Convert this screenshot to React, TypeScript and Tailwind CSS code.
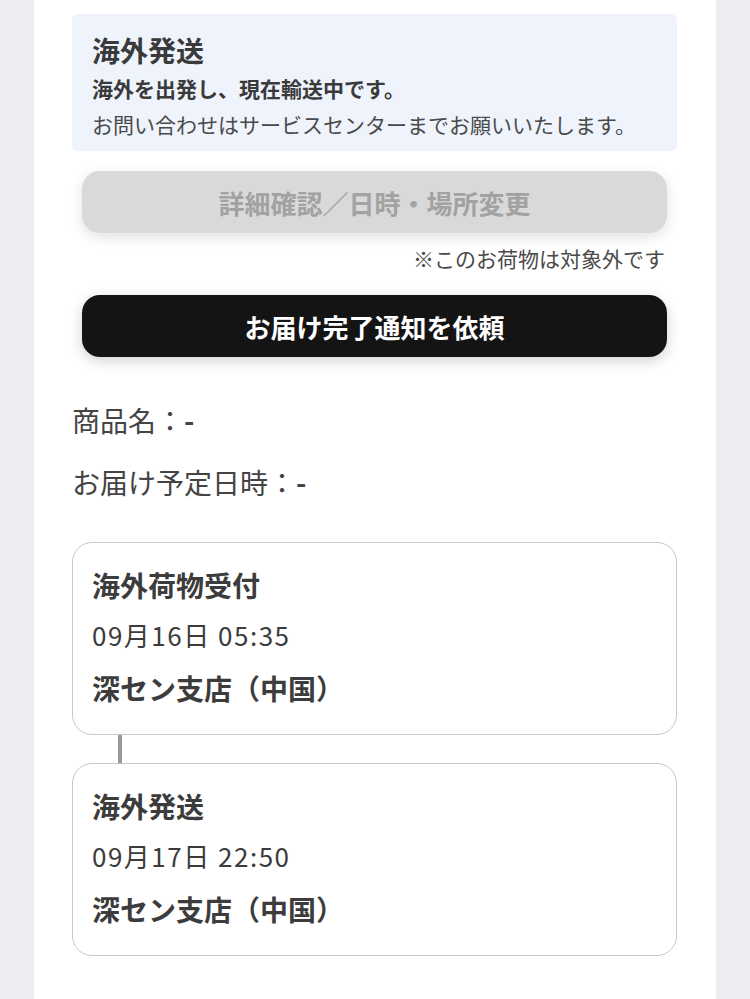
import React from "react";

const font = { fontFamily: '"Noto Sans CJK JP", "Noto Sans", sans-serif' };

type Step = { title: string; date: string; place: string };

const steps: Step[] = [
  { title: "海外荷物受付", date: "09月16日 05:35", place: "深セン支店（中国）" },
  { title: "海外発送", date: "09月17日 22:50", place: "深セン支店（中国）" },
];

function StepCard({ step }: { step: Step }) {
  return (
    <div className="rounded-[20px] border border-[#c8c8c8] bg-white px-[19px] pt-[24px] pb-[28px]">
      <p className="text-[28px] leading-[36px] font-bold text-[#3c3c3c]">{step.title}</p>
      <p className="mt-[14px] text-[26px] leading-[36px] tracking-[1.5px] text-[#3c3c3c]">{step.date}</p>
      <p className="mt-[17px] text-[28px] leading-[36px] font-bold text-[#3c3c3c]">{step.place}</p>
    </div>
  );
}

export default function App() {
  return (
    <main className="min-h-screen bg-[#ececf1] flex justify-center" style={font}>
      <div className="w-[682px] min-h-[999px] bg-white pl-[38px] pr-[39px] pt-[14px]">
        {/* status box */}
        <section className="rounded-[6px] bg-[#eef3fc] px-[20px] pt-[18px] pb-[9px]">
          <h1 className="text-[28px] leading-[36px] font-bold text-[#3a3a3a]">海外発送</h1>
          <p className="mt-[2px] text-[21px] leading-[36px] font-bold text-[#3a3a3a]">
            海外を出発し、現在輸送中です。
          </p>
          <p className="text-[21px] leading-[36px] text-[#4a4a4a]">
            お問い合わせはサービスセンターまでお願いいたします。
          </p>
        </section>

        {/* actions */}
        <div className="mx-[10px] mt-[20px]">
          <button
            disabled
            className="flex h-[62px] w-full items-center justify-center rounded-[18px] bg-[#d9d9d9] text-[26px] font-bold text-[#a2a2a2] shadow-[0_4px_14px_rgba(0,0,0,0.12)]"
          >
            詳細確認／日時・場所変更
          </button>
          <p className="mt-[11px] pr-[2px] text-right text-[21px] leading-[28px] text-[#4a4a4a]">
            ※このお荷物は対象外です
          </p>
          <button className="mt-[23px] flex h-[62px] w-full items-center justify-center rounded-[18px] bg-[#141414] text-[26px] font-bold text-white shadow-[0_4px_14px_rgba(0,0,0,0.18)]">
            お届け完了通知を依頼
          </button>
        </div>

        {/* item info */}
        <p className="mt-[43px] text-[28px] leading-[40px] text-[#444]">
          商品名：<span className="font-bold">-</span>
        </p>
        <p className="mt-[22px] text-[28px] leading-[40px] text-[#444]">
          お届け予定日時：<span className="font-bold">-</span>
        </p>

        {/* timeline */}
        <div className="mt-[40px] flex flex-col">
          {steps.map((s, i) => (
            <div key={i}>
              {i > 0 && <div className="ml-[46px] h-[28px] w-[4px] bg-[#9a9a9a]" />}
              <StepCard step={s} />
            </div>
          ))}
        </div>
      </div>
    </main>
  );
}
